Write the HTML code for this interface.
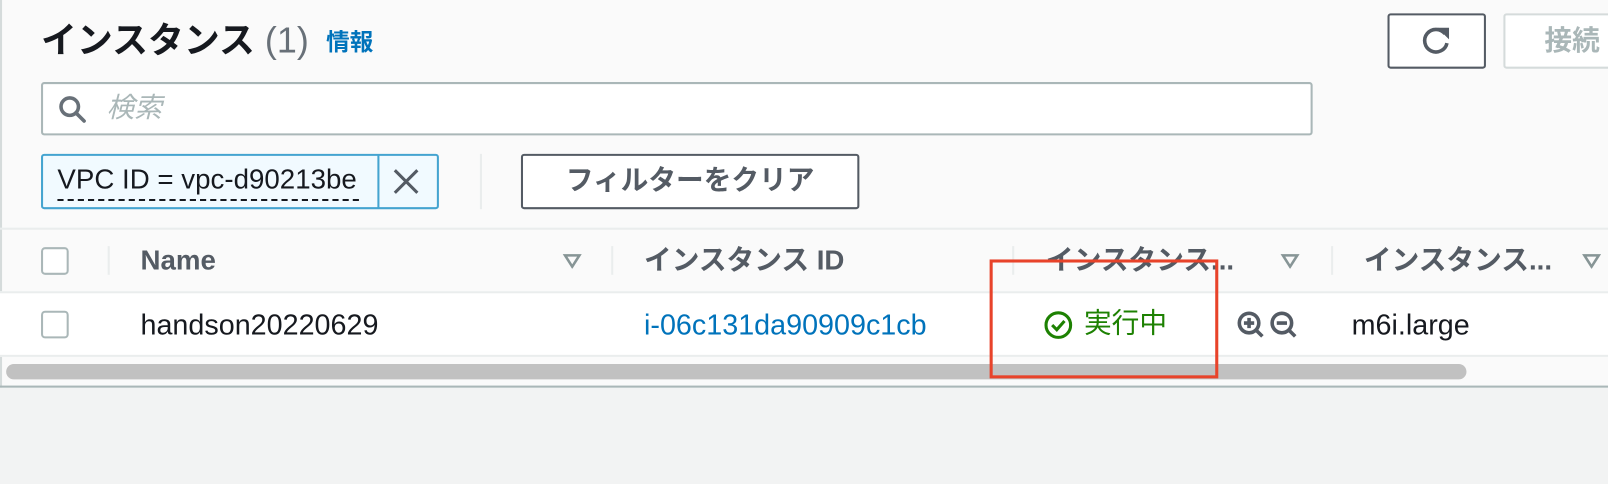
<!DOCTYPE html>
<html><head><meta charset="utf-8"><style>
*{margin:0;padding:0;box-sizing:border-box}
body{width:1608px;height:484px;overflow:hidden;background:#f2f3f3;position:relative;font-family:"Liberation Sans","Noto Sans CJK JP",sans-serif}
#w{position:absolute;left:0;top:0;width:1568px;height:472px;transform:scale(1.0255);transform-origin:0 0}
.a{position:absolute}
.t{white-space:nowrap;line-height:1}
</style></head><body><div id="w">
<div class="a" style="left:0;top:0;width:1620px;height:378px;background:#fafafa;border-left:2px solid #d5dbdb"></div>
<div class="a t" style="left:40px;top:22px;font-size:35px;font-weight:bold;color:#16191f">インスタンス <span style="color:#687078;font-weight:normal">(1)</span></div>
<div class="a t" style="left:318px;top:30px;font-size:23px;font-weight:bold;color:#0073bb">情報</div>
<div class="a" style="left:1353px;top:13px;width:96px;height:54px;border:2px solid #545b64;border-radius:3px;background:#fff"></div>
<svg class="a" style="left:1384px;top:24px" width="34" height="32" viewBox="0 0 34 32"><path d="M25 9 A11 11 0 1 0 27 18" fill="none" stroke="#545b64" stroke-width="3.5"/><path d="M20 4 L28 4 L28 12 Z" fill="#545b64" stroke="#545b64" stroke-width="2"/></svg>
<div class="a" style="left:1466px;top:13px;width:160px;height:54px;border:2px solid #d5dbdb;border-radius:3px;background:#fff"></div>
<div class="a t" style="left:1506px;top:27px;font-size:27px;font-weight:bold;color:#aab7b8">接続</div>
<div class="a" style="left:40px;top:80px;width:1240px;height:52px;border:2px solid #aab7b8;border-radius:3px;background:#fff"></div>
<svg class="a" style="left:56px;top:92px" width="30" height="30" viewBox="0 0 30 30"><circle cx="12" cy="12" r="8.5" fill="none" stroke="#687078" stroke-width="3.5"/><path d="M18 18 L26 26" stroke="#687078" stroke-width="3.5" stroke-linecap="round"/></svg>
<div class="a t" style="left:104px;top:92px;font-size:27px;font-style:italic;color:#aab7b8">検索</div>
<div class="a" style="left:40px;top:150px;width:388px;height:54px;border:2px solid #44a4d0;border-radius:3px;background:#f1faff"></div>
<div class="a" style="left:368px;top:151px;width:2px;height:52px;background:#44a4d0"></div>
<div class="a t" style="left:56px;top:162px;font-size:27px;color:#16191f">VPC ID = vpc-d90213be</div>
<div class="a" style="left:56px;top:194px;width:294px;border-top:2px dashed #16191f"></div>
<svg class="a" style="left:382px;top:163px" width="28" height="28" viewBox="0 0 28 28"><path d="M3 3 L25 25 M25 3 L3 25" stroke="#545b64" stroke-width="3"/></svg>
<div class="a" style="left:468px;top:150px;width:2px;height:54px;background:#eaeded"></div>
<div class="a" style="left:508px;top:150px;width:330px;height:54px;border:2px solid #545b64;border-radius:3px;background:#fff"></div>
<div class="a t" style="left:508px;top:163px;width:330px;text-align:center;font-size:27px;font-weight:bold;color:#545b64">フィルターをクリア</div>
<div class="a" style="left:0;top:222px;width:1620px;height:2px;background:#eaeded"></div>
<div class="a" style="left:0;top:284px;width:1620px;height:64px;background:#fff;border-top:2px solid #eaeded;border-bottom:2px solid #eaeded"></div>
<div class="a" style="left:40px;top:241px;width:27px;height:27px;border:2px solid #aab7b8;border-radius:4px;background:#fff"></div>
<div class="a" style="left:40px;top:303px;width:27px;height:27px;border:2px solid #aab7b8;border-radius:4px;background:#fff"></div>
<div class="a" style="left:105px;top:240px;width:2px;height:28px;background:#eaeded"></div>
<div class="a" style="left:596px;top:240px;width:2px;height:28px;background:#eaeded"></div>
<div class="a" style="left:987px;top:240px;width:2px;height:28px;background:#eaeded"></div>
<div class="a" style="left:1298px;top:240px;width:2px;height:28px;background:#eaeded"></div>
<div class="a t" style="left:137px;top:241px;font-size:27px;font-weight:bold;color:#545b64">Name</div>
<div class="a t" style="left:628px;top:241px;font-size:27px;font-weight:bold;color:#545b64">インスタンス ID</div>
<div class="a t" style="left:1020px;top:241px;font-size:27px;font-weight:bold;color:#545b64">インスタンス...</div>
<div class="a t" style="left:1330px;top:241px;font-size:27px;font-weight:bold;color:#545b64">インスタンス...</div>
<svg class="a" style="left:548px;top:246px" width="20" height="16"><path d="M3 3 L17 3 L10 14 Z" fill="none" stroke="#879596" stroke-width="2.5"/></svg>
<svg class="a" style="left:1248px;top:246px" width="20" height="16"><path d="M3 3 L17 3 L10 14 Z" fill="none" stroke="#879596" stroke-width="2.5"/></svg>
<svg class="a" style="left:1542px;top:246px" width="20" height="16"><path d="M3 3 L17 3 L10 14 Z" fill="none" stroke="#879596" stroke-width="2.5"/></svg>
<div class="a t" style="left:137px;top:303px;font-size:28px;color:#16191f">handson20220629</div>
<div class="a t" style="left:628px;top:303px;font-size:28px;color:#0073bb">i-06c131da90909c1cb</div>
<svg class="a" style="left:1017px;top:302px" width="30" height="30" viewBox="0 0 30 30"><circle cx="15" cy="15" r="12" fill="none" stroke="#1d8102" stroke-width="3"/><path d="M9 15 L13.5 19.5 L21 11" fill="none" stroke="#1d8102" stroke-width="3"/></svg>
<div class="a t" style="left:1057px;top:302px;font-size:27px;color:#1d8102">実行中</div>
<svg class="a" style="left:1205px;top:302px" width="64" height="32" viewBox="0 0 64 32"><g fill="none" stroke="#545b64" stroke-width="3.5"><circle cx="13" cy="13" r="9.5"/><path d="M20 20 L26 26"/><path d="M8 13 H18 M13 8 V18"/><circle cx="45" cy="13" r="9.5"/><path d="M52 20 L58 26"/><path d="M40 13 H50"/></g></svg>
<div class="a t" style="left:1318px;top:303px;font-size:28px;color:#16191f">m6i.large</div>
<div class="a" style="left:6px;top:355px;width:1424px;height:15px;border-radius:8px;background:#c1c1c1"></div>
<div class="a" style="left:0;top:376px;width:1620px;height:2px;background:#aab7b8"></div>
<div class="a" style="left:965px;top:253px;width:223px;height:116px;border:3px solid #e8432a"></div>
</div></body></html>
